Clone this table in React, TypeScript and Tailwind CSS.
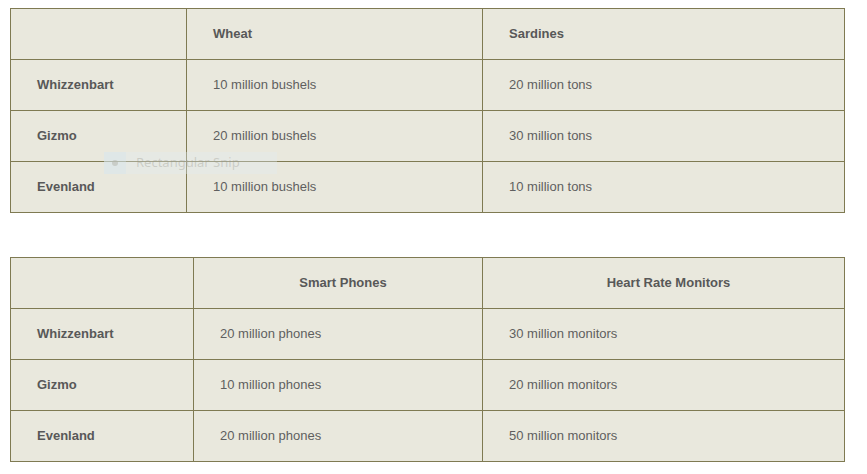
import React from "react";

type Row = [string, string, string];

function DataTable({
  headers,
  rows,
  widths,
  centerHead,
}: {
  headers: [string, string];
  rows: Row[];
  widths: [string, string];
  centerHead?: boolean;
}) {
  const cell = "border border-[#7f7a52] h-[51px] pl-[26px] pr-[16px] align-middle";
  return (
    <table className="w-[835px] table-fixed border-collapse bg-[#e9e8dd] text-[13px]">
      <colgroup>
        <col className={widths[0]} />
        <col className={widths[1]} />
        <col />
      </colgroup>
      <thead>
        <tr>
          <th className={cell}></th>
          <th className={`${cell} font-bold text-[#585858] ${centerHead ? "text-center" : "text-left"}`}>{headers[0]}</th>
          <th className={`${cell} font-bold text-[#585858] ${centerHead ? "text-center" : "text-left"}`}>{headers[1]}</th>
        </tr>
      </thead>
      <tbody>
        {rows.map((r) => (
          <tr key={r[0]}>
            <th className={`${cell} text-left font-bold text-[#585858]`}>{r[0]}</th>
            <td className={`${cell} text-[#5f5f5f]`}>{r[1]}</td>
            <td className={`${cell} text-[#5f5f5f]`}>{r[2]}</td>
          </tr>
        ))}
      </tbody>
    </table>
  );
}

export default function App() {
  return (
    <div
      className="relative min-h-[474px] w-[867px] bg-white pl-[10px] pt-[8px]"
      style={{ fontFamily: '"Liberation Sans", Arial, sans-serif' }}
    >
      <div className="flex flex-col gap-[44px]">
        <DataTable
          headers={["Wheat", "Sardines"]}
          widths={["w-[176px]", "w-[296px]"]}
          rows={[
            ["Whizzenbart", "10 million bushels", "20 million tons"],
            ["Gizmo", "20 million bushels", "30 million tons"],
            ["Evenland", "10 million bushels", "10 million tons"],
          ]}
        />
        <DataTable
          headers={["Smart Phones", "Heart Rate Monitors"]}
          widths={["w-[183px]", "w-[289px]"]}
          centerHead
          rows={[
            ["Whizzenbart", "20 million phones", "30 million monitors"],
            ["Gizmo", "10 million phones", "20 million monitors"],
            ["Evenland", "20 million phones", "50 million monitors"],
          ]}
        />
      </div>
      <div className="pointer-events-none absolute left-[104px] top-[152px] flex h-[22px] w-[173px] items-center bg-[rgba(225,235,240,0.35)]">
        <div className="flex h-full w-[22px] items-center justify-center bg-[rgba(210,228,238,0.35)]">
          <div className="h-[6px] w-[6px] rounded-full bg-[rgba(180,180,170,0.5)]" />
        </div>
        <span
          className="ml-[10px] text-[13px] text-[rgba(150,150,140,0.35)]"
          style={{ fontFamily: '"Noto Sans", "Open Sans", sans-serif' }}
        >
          Rectangular Snip
        </span>
      </div>
    </div>
  );
}
